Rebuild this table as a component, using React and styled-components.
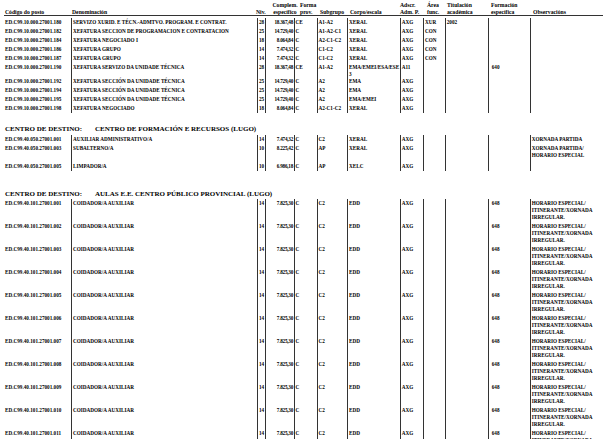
import React from 'react';
import styled, { createGlobalStyle } from 'styled-components';

const Global = createGlobalStyle`
  html, body { margin: 0; padding: 0; background: #fff; overflow: hidden; }
  body { font-family: "Liberation Serif", "Times New Roman", serif; color: #000; }
`;

const BODY_COLS = '67px 186px 8px 29px 23px 30px 53px 23px 22px 43px 42px 72px';
const HEAD_COLS = '67px 184px 14px 30px 20px 30px 50px 27px 20px 44px 42px 69px';

const Page = styled.div`
  width: 615px;
  height: 439px;
  box-sizing: border-box;
  padding: 2px 0 0 4px;
  overflow: hidden;
`;

const HeaderRow = styled.div`
  display: grid;
  grid-template-columns: ${HEAD_COLS};
  width: 599px;
  padding-left: 1px;
  box-sizing: border-box;
  border-bottom: 1px solid #333;
`;

const HeadCell = styled.div`
  display: flex;
  flex-direction: column;
  justify-content: flex-end;
  height: 13px;
  font-size: 5.7px;
  line-height: 6.5px;
  font-weight: bold;
  white-space: nowrap;
  text-align: ${(p) => p.$align || 'left'};
`;

const Section = styled.div`
  margin-top: ${(p) => p.$top}px;
`;

const SectionTitle = styled.div`
  display: flex;
  padding-left: 1px;
  font-size: 7px;
  line-height: 8px;
  font-weight: bold;
  white-space: nowrap;
  margin-bottom: ${(p) => p.$gap}px;
`;

const TitleLabel = styled.span`
  width: 90px;
`;

const Row = styled.div`
  display: grid;
  grid-template-columns: ${BODY_COLS};
  height: ${(p) => p.$h}px;
`;

const Cell = styled.div`
  box-sizing: border-box;
  border-left: ${(p) => (p.$first ? 'none' : '1px solid #333')};
  padding-top: 1px;
  padding-left: ${(p) => p.$pl || 0}px;
  padding-right: ${(p) => p.$pr || 0}px;
  text-align: ${(p) => p.$align || 'left'};
  font-size: 5.2px;
  line-height: ${(p) => p.$lh || 7}px;
  font-weight: bold;
  white-space: nowrap;
  letter-spacing: ${(p) => p.$ls || 0}px;
`;

const columns = [
  { pl: 1, first: true },
  { pl: 1 },
  { align: 'center' },
  { align: 'right', pr: 1, ls: -0.25 },
  { pl: 0.5 },
  { pl: 0.5 },
  { pl: 1, lh: 6.5 },
  { pl: 0.7 },
  { pl: 1 },
  { pl: 0.7 },
  { pl: 2.7 },
  { pl: 0.7 },
];

const headers = [
  { lines: ['Código do posto'] },
  { lines: ['Denominación'] },
  { lines: ['Niv.'] },
  { lines: ['Complem.', 'específico'], align: 'center' },
  { lines: ['Forma', 'prov.'] },
  { lines: ['Subgrupo'] },
  { lines: ['Corpo/escala'] },
  { lines: ['Adscr.', 'Adm. P.'] },
  { lines: ['Área', 'func.'] },
  { lines: ['Titulación', 'académica'] },
  { lines: ['Formación', 'específica'] },
  { lines: ['Observacións'] },
];

const topRows = [
  { h: 9, v: ['ED.C99.10.000.27001.180', 'SERVIZO XURID. E TÉCN.-ADMTVO. PROGRAM. E CONTRAT.', '28', '18.367,48', 'CE', 'A1-A2', 'XERAL', 'AXG', 'XUR', '2002', '', ''] },
  { h: 9, v: ['ED.C99.10.000.27001.182', 'XEFATURA SECCION DE PROGRAMACION E CONTRATACION', '25', '14.729,40', 'C', 'A1-A2-C1', 'XERAL', 'AXG', 'CON', '', '', ''] },
  { h: 9, v: ['ED.C99.10.000.27001.184', 'XEFATURA NEGOCIADO I', '18', '8.064,84', 'C', 'A2-C1-C2', 'XERAL', 'AXG', 'CON', '', '', ''] },
  { h: 9, v: ['ED.C99.10.000.27001.186', 'XEFATURA GRUPO', '14', '7.474,32', 'C', 'C1-C2', 'XERAL', 'AXG', 'CON', '', '', ''] },
  { h: 9, v: ['ED.C99.10.000.27001.187', 'XEFATURA GRUPO', '14', '7.474,32', 'C', 'C1-C2', 'XERAL', 'AXG', 'CON', '', '', ''] },
  { h: 14, v: ['ED.C99.10.000.27001.190', 'XEFATURA SERVIZO DA UNIDADE TÉCNICA', '28', '18.367,48', 'CE', 'A1-A2', ['EMA/EMEI/ESA/ESE', '3'], 'A11', '', '', '640', ''] },
  { h: 9, v: ['ED.C99.10.000.27001.192', 'XEFATURA SECCIÓN DA UNIDADE TÉCNICA', '25', '14.729,40', 'C', 'A2', 'EMA', 'AXG', '', '', '', ''] },
  { h: 9, v: ['ED.C99.10.000.27001.194', 'XEFATURA SECCIÓN DA UNIDADE TÉCNICA', '25', '14.729,40', 'C', 'A2', 'EMA', 'AXG', '', '', '', ''] },
  { h: 9, v: ['ED.C99.10.000.27001.195', 'XEFATURA SECCIÓN DA UNIDADE TÉCNICA', '25', '14.729,40', 'C', 'A2', 'EMA/EMEI', 'AXG', '', '', '', ''] },
  { h: 9, v: ['ED.C99.10.000.27001.198', 'XEFATURA NEGOCIADO', '18', '8.064,84', 'C', 'A2-C1-C2', 'XERAL', 'AXG', '', '', '', ''] },
];

const formacionRows = [
  { h: 9, v: ['ED.C99.40.050.27001.001', 'AUXILIAR ADMINISTRATIVO/A', '14', '7.474,32', 'C', 'C2', 'XERAL', 'AXG', '', '', '', 'XORNADA PARTIDA'] },
  { h: 18, v: ['ED.C99.40.050.27001.003', 'SUBALTERNO/A', '10', '8.225,42', 'C', 'AP', 'XERAL', 'AXG', '', '', '', ['XORNADA PARTIDA/', 'HORARIO ESPECIAL']] },
  { h: 9, v: ['ED.C99.40.050.27001.005', 'LIMPADOR/A', '10', '6.986,18', 'C', 'AP', 'XELC', 'AXG', '', '', '', ''] },
];

const aulasRows = Array.from({ length: 11 }, (_, i) => ({
  h: 23,
  v: [
    `ED.C99.40.101.27001.${String(i + 1).padStart(3, '0')}`,
    'COIDADOR/A AUXILIAR',
    '14',
    '7.825,30',
    'C',
    'C2',
    'EDD',
    'AXG',
    '',
    '',
    '648',
    ['HORARIO ESPECIAL/', 'ITINERANTE/XORNADA', 'IRREGULAR.'],
  ],
}));

function Lines({ value }) {
  if (Array.isArray(value)) {
    return value.map((l, i) => (
      <React.Fragment key={i}>
        {i > 0 && <br />}
        {l}
      </React.Fragment>
    ));
  }
  return value;
}

function DataRows({ rows }) {
  return rows.map((r, ri) => (
    <Row key={ri} $h={r.h}>
      {r.v.map((val, ci) => {
        const c = columns[ci];
        return (
          <Cell
            key={ci}
            $first={c.first}
            $pl={c.pl}
            $pr={c.pr}
            $align={c.align}
            $lh={Array.isArray(val) ? c.lh : undefined}
            $ls={c.ls}
          >
            <Lines value={val} />
          </Cell>
        );
      })}
    </Row>
  ));
}

export default function App() {
  return (
    <>
      <Global />
      <Page>
        <HeaderRow>
          {headers.map((h, i) => (
            <HeadCell key={i} $align={h.align}>
              {h.lines.map((l, j) => (
                <div key={j}>{l}</div>
              ))}
            </HeadCell>
          ))}
        </HeaderRow>
        <Section $top={2}>
          <DataRows rows={topRows} />
        </Section>
        <Section $top={12}>
          <SectionTitle $gap={2}>
            <TitleLabel>CENTRO DE DESTINO:</TitleLabel>
            <span>CENTRO DE FORMACIÓN E RECURSOS (LUGO)</span>
          </SectionTitle>
          <DataRows rows={formacionRows} />
        </Section>
        <Section $top={19}>
          <SectionTitle $gap={1}>
            <TitleLabel>CENTRO DE DESTINO:</TitleLabel>
            <span>AULAS E.E. CENTRO PÚBLICO PROVINCIAL (LUGO)</span>
          </SectionTitle>
          <DataRows rows={aulasRows} />
        </Section>
      </Page>
    </>
  );
}
